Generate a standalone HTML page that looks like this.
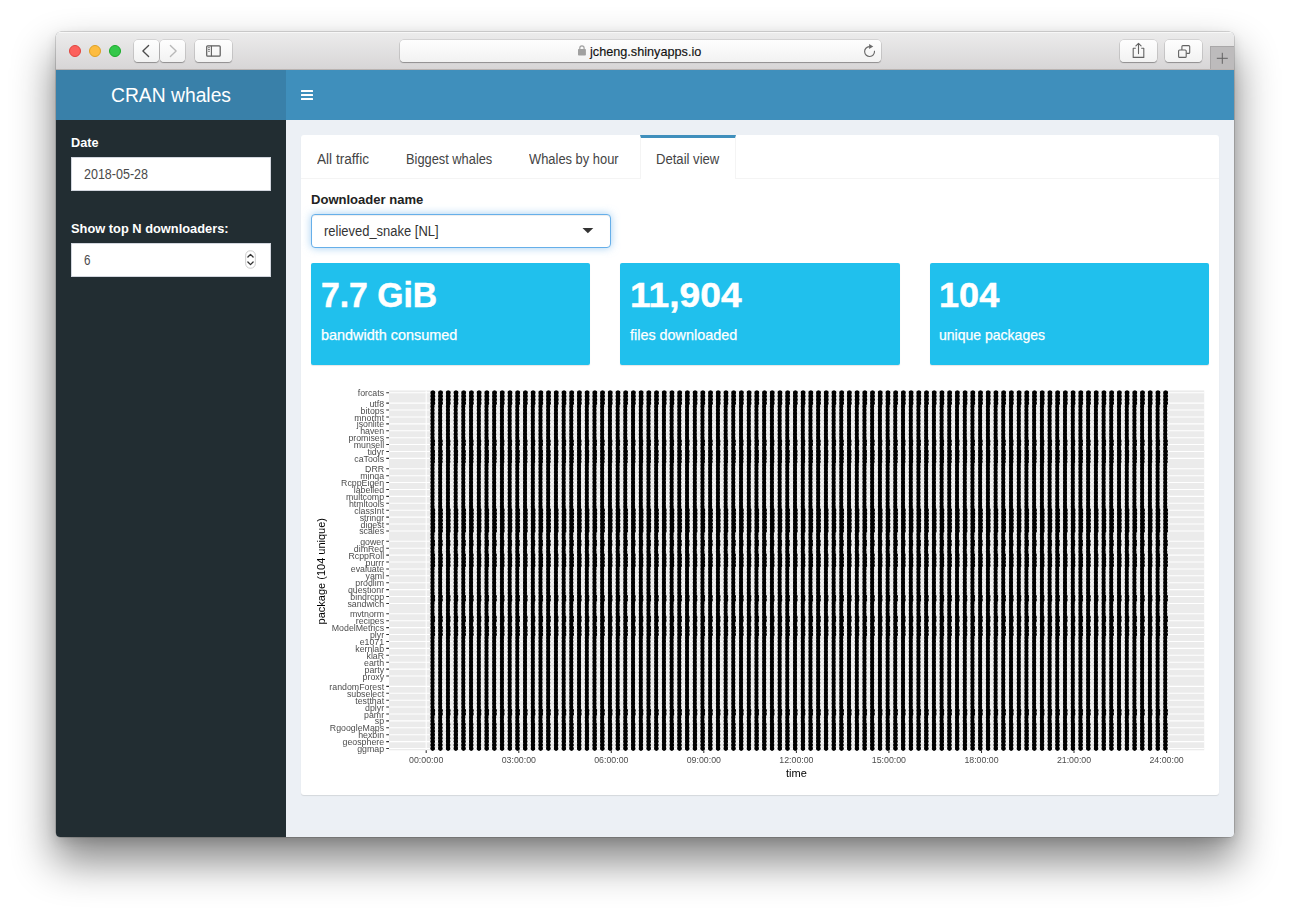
<!DOCTYPE html>
<html lang="en">
<head>
<meta charset="utf-8">
<title>CRAN whales</title>
<style>
html,body{margin:0;padding:0;}
body{width:1290px;height:917px;background:#fff;position:relative;overflow:hidden;font-family:"Liberation Sans",sans-serif;}
.abs{position:absolute;}
.t{position:absolute;white-space:nowrap;transform-origin:0 0;line-height:normal;display:inline-block;}
#shadow{position:absolute;left:56px;top:32px;width:1178px;height:805px;border-radius:5px;
  box-shadow:0 0 0 0.5px rgba(0,0,0,.28),0 23px 42px 2px rgba(0,0,0,.47),0 4px 12px rgba(0,0,0,.12);}
#win{position:absolute;left:56px;top:32px;width:1178px;height:805px;border-radius:5px 5px 4px 4px;overflow:hidden;background:#ecf0f5;}
#toolbar{position:absolute;left:0;top:0;width:1178px;height:38px;background:linear-gradient(#ececec,#d7d5d6);box-shadow:inset 0 1px 0 #f7f7f7;}
#toolbar:after{content:"";position:absolute;left:0;right:0;bottom:0;height:1px;background:#b9b3b1;}
.btn{position:absolute;top:8px;height:22px;border-radius:4px;background:linear-gradient(#fefefe,#f2f2f2);box-shadow:0 0 0 .5px rgba(0,0,0,.18),0 1px 1px -.5px rgba(0,0,0,.28);}
.dot{position:absolute;top:12.7px;width:12px;height:12px;border-radius:50%;box-sizing:border-box;}
#logo{position:absolute;left:0;top:38px;width:230px;height:50px;background:#3980a9;}
#nav{position:absolute;left:230px;top:38px;width:948px;height:50px;background:#3f8fbc;}
#side{position:absolute;left:0;top:88px;width:230px;height:717px;background:#222d32;}
.inp{position:absolute;left:15px;width:200px;height:34px;background:#fff;border:1px solid #d2d6de;box-sizing:border-box;}
#box{position:absolute;left:245px;top:103px;width:918px;height:660px;background:#fff;border-radius:3px;box-shadow:0 1px 1px rgba(0,0,0,.1);}
#tabline{position:absolute;left:0;top:43px;width:918px;height:1px;background:#f4f4f4;}
#acttab{position:absolute;left:339px;top:0;width:96px;height:44px;background:#fff;border-top:3px solid #3f8fbc;border-left:1px solid #f4f4f4;border-right:1px solid #f4f4f4;box-sizing:border-box;}
.vb{position:absolute;top:128px;height:102px;background:#20c0ed;border-radius:2px;box-shadow:0 1px 1px rgba(0,0,0,.1);}
#selbox{position:absolute;left:10px;top:79px;width:300px;height:34px;box-sizing:border-box;border:1px solid #66afe9;border-radius:4px;background:#fff;box-shadow:inset 0 1px 1px rgba(0,0,0,.075),0 0 8px rgba(102,175,233,.6);}
</style>
</head>
<body>
<div id="shadow"></div>
<div id="win">
  <div id="toolbar">
    <div class="dot" style="left:13px;background:#fc615d;border:.5px solid #e0443e;"></div>
    <div class="dot" style="left:33px;background:#fdbc40;border:.5px solid #dea123;"></div>
    <div class="dot" style="left:53px;background:#34c84a;border:.5px solid #1aab29;"></div>
    <div class="btn" style="left:78px;width:25px;"></div>
    <div class="btn" style="left:104px;width:25px;"></div>
    <div class="btn" style="left:139px;width:37px;"></div>
    <div class="btn" style="left:343.5px;width:481.2px;"></div>
    <div class="btn" style="left:1064px;width:36.8px;"></div>
    <div class="btn" style="left:1108.7px;width:37.4px;"></div>
    <div class="abs" style="left:1153.8px;top:13.6px;width:25px;height:24px;background:#bdbbbc;box-shadow:inset 1px 1px 0 #a9a7a8;"></div>
    <svg class="abs" style="left:0;top:0" width="1178" height="38" viewBox="0 0 1178 38" fill="none">
      <!-- back / forward -->
      <path d="M92.6 13.5 L86.9 19 L92.6 24.5" stroke="#4d4d4d" stroke-width="1.35" stroke-linecap="round" stroke-linejoin="round"/>
      <path d="M114.4 13.5 L120.1 19 L114.4 24.5" stroke="#b8b8b8" stroke-width="1.35" stroke-linecap="round" stroke-linejoin="round"/>
      <!-- sidebar icon -->
      <rect x="150.7" y="13.8" width="13.5" height="10.4" rx="1" stroke="#5e5e5e" stroke-width="1.25"/>
      <path d="M155.4 13.8V24.2" stroke="#5e5e5e" stroke-width="1.1"/>
      <path d="M152 15.7h1.9M152 17.5h1.9M152 19.3h1.9" stroke="#5e5e5e" stroke-width=".8"/>
      <!-- lock -->
      <rect x="522" y="16.9" width="7.9" height="6.6" rx=".8" fill="#a0a0a0"/>
      <path d="M523.8 17.5v-1.4a2.15 2.15 0 0 1 4.3 0V17.5" stroke="#a0a0a0" stroke-width="1.2"/>
      <!-- reload -->
      <path d="M813.3 14.6A4.95 4.95 0 1 0 818.5 19.2" stroke="#6a6a6a" stroke-width="1.15" stroke-linecap="round"/>
      <path d="M813.1 12.1l4.2 2.3-4.2 2.6z" fill="#6a6a6a"/>
      <!-- share -->
      <path d="M1079.8 16.2h-2.6v9.2h10.6v-9.2h-2.6" stroke="#626262" stroke-width="1.1" stroke-linejoin="round"/>
      <path d="M1082.5 21.6v-10M1079.9 13.9l2.6-2.6 2.6 2.6" stroke="#626262" stroke-width="1.1" stroke-linecap="round" stroke-linejoin="round"/>
      <!-- tabs -->
      <rect x="1122.6" y="18" width="7.6" height="7.4" rx="1" stroke="#626262" stroke-width="1.1"/>
      <path d="M1125.9 18v-3.4a1 1 0 0 1 1-1h5.8a1 1 0 0 1 1 1v5.8a1 1 0 0 1-1 1h-2.4" stroke="#626262" stroke-width="1.1"/>
      <!-- plus -->
      <path d="M1166.3 20.8v11M1160.8 26.3h11" stroke="#626262" stroke-width="1"/>
    </svg>
  </div>
  <div id="logo"></div>
  <div id="nav">
    <div class="abs" style="left:14.9px;top:19.8px;width:12.6px;height:2.1px;background:#fff;border-radius:.5px;"></div>
    <div class="abs" style="left:14.9px;top:23.85px;width:12.6px;height:2.1px;background:#fff;border-radius:.5px;"></div>
    <div class="abs" style="left:14.9px;top:27.9px;width:12.6px;height:2.1px;background:#fff;border-radius:.5px;"></div>
  </div>
  <div id="side">
    <div class="inp" style="top:37px;"></div>
    <div class="inp" style="top:123px;"></div>
    <svg class="abs" style="left:188px;top:130px" width="14" height="20" viewBox="0 0 14 20" fill="none">
      <rect x="1.7" y="0.8" width="9.6" height="17.4" rx="4.4" fill="#fff" stroke="#c6c6c6" stroke-width=".9"/>
      <path d="M3.9 7l2.6-2.6 2.6 2.6M3.9 12l2.6 2.6 2.6-2.6" stroke="#333" stroke-width="1.3" stroke-linecap="round" stroke-linejoin="round"/>
    </svg>
  </div>
  <div id="box">
    <div id="tabline"></div>
    <div id="acttab"></div>
    <div id="selbox"></div>
    <svg class="abs" style="left:279.7px;top:91.8px" width="14" height="8" viewBox="0 0 14 8"><path d="M1.5 0.9h10.8L6.9 6.2z" fill="#333"/></svg>
    <div class="vb" style="left:10px;width:279px;"></div>
    <div class="vb" style="left:319px;width:280px;"></div>
    <div class="vb" style="left:629px;width:279px;"></div>
  </div>
</div>
<svg id="chart" width="898" height="400" viewBox="311 380 898 400" style="position:absolute;left:311px;top:380px;will-change:transform" font-family='"Liberation Sans", sans-serif'>
<rect x="311" y="380" width="898" height="400" fill="#fff"/>
<rect x="389.0" y="390.4" width="815.2" height="359.9" fill="#ebebeb"/>
<path d="M472.5 390.4V750.3M565.0 390.4V750.3M657.6 390.4V750.3M750.1 390.4V750.3M842.7 390.4V750.3M935.2 390.4V750.3M1027.8 390.4V750.3M1120.3 390.4V750.3" stroke="#f4f4f4" stroke-width="0.6" fill="none"/>
<path d="M389.0 392.77H1204.2M389.0 403.13H1204.2M389.0 410.04H1204.2M389.0 416.95H1204.2M389.0 423.86H1204.2M389.0 430.77H1204.2M389.0 437.67H1204.2M389.0 444.58H1204.2M389.0 451.49H1204.2M389.0 458.40H1204.2M389.0 468.76H1204.2M389.0 475.67H1204.2M389.0 482.57H1204.2M389.0 489.48H1204.2M389.0 496.39H1204.2M389.0 503.30H1204.2M389.0 510.21H1204.2M389.0 517.11H1204.2M389.0 524.02H1204.2M389.0 530.93H1204.2M389.0 541.29H1204.2M389.0 548.20H1204.2M389.0 555.11H1204.2M389.0 562.02H1204.2M389.0 568.92H1204.2M389.0 575.83H1204.2M389.0 582.74H1204.2M389.0 589.65H1204.2M389.0 596.55H1204.2M389.0 603.46H1204.2M389.0 613.82H1204.2M389.0 620.73H1204.2M389.0 627.64H1204.2M389.0 634.55H1204.2M389.0 641.46H1204.2M389.0 648.36H1204.2M389.0 655.27H1204.2M389.0 662.18H1204.2M389.0 669.09H1204.2M389.0 676.00H1204.2M389.0 686.36H1204.2M389.0 693.26H1204.2M389.0 700.17H1204.2M389.0 707.08H1204.2M389.0 713.99H1204.2M389.0 720.90H1204.2M389.0 727.80H1204.2M389.0 734.71H1204.2M389.0 741.62H1204.2M389.0 748.53H1204.2M426.2 390.4V750.3M518.8 390.4V750.3M611.3 390.4V750.3M703.8 390.4V750.3M796.4 390.4V750.3M888.9 390.4V750.3M981.5 390.4V750.3M1074.0 390.4V750.3M1166.6 390.4V750.3" stroke="#fff" stroke-width="1.07" fill="none"/>
<path d="M432.50 392.77V748.54M440.21 392.77V748.54M447.93 392.77V748.54M455.64 392.77V748.54M463.35 392.77V748.54M471.07 392.77V748.54M478.78 392.77V748.54M486.50 392.77V748.54M494.21 392.77V748.54M501.92 392.77V748.54M509.64 392.77V748.54M517.35 392.77V748.54M525.06 392.77V748.54M532.78 392.77V748.54M540.49 392.77V748.54M548.21 392.77V748.54M555.92 392.77V748.54M563.63 392.77V748.54M571.35 392.77V748.54M579.06 392.77V748.54M586.77 392.77V748.54M594.49 392.77V748.54M602.20 392.77V748.54M609.91 392.77V748.54M617.63 392.77V748.54M625.34 392.77V748.54M633.06 392.77V748.54M640.77 392.77V748.54M648.48 392.77V748.54M656.20 392.77V748.54M663.91 392.77V748.54M671.62 392.77V748.54M679.34 392.77V748.54M687.05 392.77V748.54M694.77 392.77V748.54M702.48 392.77V748.54M710.19 392.77V748.54M717.91 392.77V748.54M725.62 392.77V748.54M733.33 392.77V748.54M741.05 392.77V748.54M748.76 392.77V748.54M756.47 392.77V748.54M764.19 392.77V748.54M771.90 392.77V748.54M779.62 392.77V748.54M787.33 392.77V748.54M795.04 392.77V748.54M802.76 392.77V748.54M810.47 392.77V748.54M818.18 392.77V748.54M825.90 392.77V748.54M833.61 392.77V748.54M841.33 392.77V748.54M849.04 392.77V748.54M856.75 392.77V748.54M864.47 392.77V748.54M872.18 392.77V748.54M879.89 392.77V748.54M887.61 392.77V748.54M895.32 392.77V748.54M903.03 392.77V748.54M910.75 392.77V748.54M918.46 392.77V748.54M926.18 392.77V748.54M933.89 392.77V748.54M941.60 392.77V748.54M949.32 392.77V748.54M957.03 392.77V748.54M964.74 392.77V748.54M972.46 392.77V748.54M980.17 392.77V748.54M987.89 392.77V748.54M995.60 392.77V748.54M1003.31 392.77V748.54M1011.03 392.77V748.54M1018.74 392.77V748.54M1026.45 392.77V748.54M1034.17 392.77V748.54M1041.88 392.77V748.54M1049.59 392.77V748.54M1057.31 392.77V748.54M1065.02 392.77V748.54M1072.74 392.77V748.54M1080.45 392.77V748.54M1088.16 392.77V748.54M1095.88 392.77V748.54M1103.59 392.77V748.54M1111.30 392.77V748.54M1119.02 392.77V748.54M1126.73 392.77V748.54M1134.45 392.77V748.54M1142.16 392.77V748.54M1149.87 392.77V748.54M1157.59 392.77V748.54M1165.30 392.77V748.54" stroke="#000" stroke-width="3.3" fill="none"/>
<path d="M432.50 392.77V748.54M440.21 392.77V748.54M447.93 392.77V748.54M455.64 392.77V748.54M463.35 392.77V748.54M471.07 392.77V748.54M478.78 392.77V748.54M486.50 392.77V748.54M494.21 392.77V748.54M501.92 392.77V748.54M509.64 392.77V748.54M517.35 392.77V748.54M525.06 392.77V748.54M532.78 392.77V748.54M540.49 392.77V748.54M548.21 392.77V748.54M555.92 392.77V748.54M563.63 392.77V748.54M571.35 392.77V748.54M579.06 392.77V748.54M586.77 392.77V748.54M594.49 392.77V748.54M602.20 392.77V748.54M609.91 392.77V748.54M617.63 392.77V748.54M625.34 392.77V748.54M633.06 392.77V748.54M640.77 392.77V748.54M648.48 392.77V748.54M656.20 392.77V748.54M663.91 392.77V748.54M671.62 392.77V748.54M679.34 392.77V748.54M687.05 392.77V748.54M694.77 392.77V748.54M702.48 392.77V748.54M710.19 392.77V748.54M717.91 392.77V748.54M725.62 392.77V748.54M733.33 392.77V748.54M741.05 392.77V748.54M748.76 392.77V748.54M756.47 392.77V748.54M764.19 392.77V748.54M771.90 392.77V748.54M779.62 392.77V748.54M787.33 392.77V748.54M795.04 392.77V748.54M802.76 392.77V748.54M810.47 392.77V748.54M818.18 392.77V748.54M825.90 392.77V748.54M833.61 392.77V748.54M841.33 392.77V748.54M849.04 392.77V748.54M856.75 392.77V748.54M864.47 392.77V748.54M872.18 392.77V748.54M879.89 392.77V748.54M887.61 392.77V748.54M895.32 392.77V748.54M903.03 392.77V748.54M910.75 392.77V748.54M918.46 392.77V748.54M926.18 392.77V748.54M933.89 392.77V748.54M941.60 392.77V748.54M949.32 392.77V748.54M957.03 392.77V748.54M964.74 392.77V748.54M972.46 392.77V748.54M980.17 392.77V748.54M987.89 392.77V748.54M995.60 392.77V748.54M1003.31 392.77V748.54M1011.03 392.77V748.54M1018.74 392.77V748.54M1026.45 392.77V748.54M1034.17 392.77V748.54M1041.88 392.77V748.54M1049.59 392.77V748.54M1057.31 392.77V748.54M1065.02 392.77V748.54M1072.74 392.77V748.54M1080.45 392.77V748.54M1088.16 392.77V748.54M1095.88 392.77V748.54M1103.59 392.77V748.54M1111.30 392.77V748.54M1119.02 392.77V748.54M1126.73 392.77V748.54M1134.45 392.77V748.54M1142.16 392.77V748.54M1149.87 392.77V748.54M1157.59 392.77V748.54M1165.30 392.77V748.54" stroke="#000" stroke-width="4.3" stroke-linecap="round" stroke-dasharray="0 3.4539" fill="none"/>
<path d="M433.20 392.77V403.14M433.00 441.13V444.59M433.00 451.49V454.95M432.90 458.40V461.86M433.20 510.21V530.94M433.00 541.29V544.76M433.10 555.11V565.48M433.10 596.55V600.02M433.10 617.28V620.74M433.10 627.64V634.56M433.10 710.53V714.00M432.85 724.35V748.54M440.91 392.77V403.14M440.71 441.13V444.59M440.71 451.49V454.95M440.61 458.40V461.86M440.91 510.21V530.94M440.71 541.29V544.76M440.81 555.11V565.48M440.81 596.55V600.02M440.81 617.28V620.74M440.81 627.64V634.56M440.81 710.53V714.00M440.56 724.35V748.54M448.63 392.77V403.14M448.43 441.13V444.59M448.43 451.49V454.95M448.33 458.40V461.86M448.63 510.21V530.94M448.43 541.29V544.76M448.53 555.11V565.48M448.53 596.55V600.02M448.53 617.28V620.74M448.53 627.64V634.56M448.53 710.53V714.00M448.28 724.35V748.54M456.34 392.77V403.14M456.14 441.13V444.59M456.14 451.49V454.95M456.04 458.40V461.86M456.34 510.21V530.94M456.14 541.29V544.76M456.24 555.11V565.48M456.24 596.55V600.02M456.24 617.28V620.74M456.24 627.64V634.56M456.24 710.53V714.00M455.99 724.35V748.54M464.05 392.77V403.14M463.85 441.13V444.59M463.85 451.49V454.95M463.75 458.40V461.86M464.05 510.21V530.94M463.85 541.29V544.76M463.95 555.11V565.48M463.95 596.55V600.02M463.95 617.28V620.74M463.95 627.64V634.56M463.95 710.53V714.00M463.70 724.35V748.54M471.77 392.77V403.14M471.57 441.13V444.59M471.57 451.49V454.95M471.47 458.40V461.86M471.77 510.21V530.94M471.57 541.29V544.76M471.67 555.11V565.48M471.67 596.55V600.02M471.67 617.28V620.74M471.67 627.64V634.56M471.67 710.53V714.00M471.42 724.35V748.54M479.48 392.77V403.14M479.28 441.13V444.59M479.28 451.49V454.95M479.18 458.40V461.86M479.48 510.21V530.94M479.28 541.29V544.76M479.38 555.11V565.48M479.38 596.55V600.02M479.38 617.28V620.74M479.38 627.64V634.56M479.38 710.53V714.00M479.13 724.35V748.54M487.20 392.77V403.14M487.00 441.13V444.59M487.00 451.49V454.95M486.90 458.40V461.86M487.20 510.21V530.94M487.00 541.29V544.76M487.10 555.11V565.48M487.10 596.55V600.02M487.10 617.28V620.74M487.10 627.64V634.56M487.10 710.53V714.00M486.85 724.35V748.54M494.91 392.77V403.14M494.71 441.13V444.59M494.71 451.49V454.95M494.61 458.40V461.86M494.91 510.21V530.94M494.71 541.29V544.76M494.81 555.11V565.48M494.81 596.55V600.02M494.81 617.28V620.74M494.81 627.64V634.56M494.81 710.53V714.00M494.56 724.35V748.54M502.62 392.77V403.14M502.42 441.13V444.59M502.42 451.49V454.95M502.32 458.40V461.86M502.62 510.21V530.94M502.42 541.29V544.76M502.52 555.11V565.48M502.52 596.55V600.02M502.52 617.28V620.74M502.52 627.64V634.56M502.52 710.53V714.00M502.27 724.35V748.54M510.34 392.77V403.14M510.14 441.13V444.59M510.14 451.49V454.95M510.04 458.40V461.86M510.34 510.21V530.94M510.14 541.29V544.76M510.24 555.11V565.48M510.24 596.55V600.02M510.24 617.28V620.74M510.24 627.64V634.56M510.24 710.53V714.00M509.99 724.35V748.54M518.05 392.77V403.14M517.85 441.13V444.59M517.85 451.49V454.95M517.75 458.40V461.86M518.05 510.21V530.94M517.85 541.29V544.76M517.95 555.11V565.48M517.95 596.55V600.02M517.95 617.28V620.74M517.95 627.64V634.56M517.95 710.53V714.00M517.70 724.35V748.54M525.76 392.77V403.14M525.56 441.13V444.59M525.56 451.49V454.95M525.46 458.40V461.86M525.76 510.21V530.94M525.56 541.29V544.76M525.66 555.11V565.48M525.66 596.55V600.02M525.66 617.28V620.74M525.66 627.64V634.56M525.66 710.53V714.00M525.41 724.35V748.54M533.48 392.77V403.14M533.28 441.13V444.59M533.28 451.49V454.95M533.18 458.40V461.86M533.48 510.21V530.94M533.28 541.29V544.76M533.38 555.11V565.48M533.38 596.55V600.02M533.38 617.28V620.74M533.38 627.64V634.56M533.38 710.53V714.00M533.13 724.35V748.54M541.19 392.77V403.14M540.99 441.13V444.59M540.99 451.49V454.95M540.89 458.40V461.86M541.19 510.21V530.94M540.99 541.29V544.76M541.09 555.11V565.48M541.09 596.55V600.02M541.09 617.28V620.74M541.09 627.64V634.56M541.09 710.53V714.00M540.84 724.35V748.54M548.91 392.77V403.14M548.71 441.13V444.59M548.71 451.49V454.95M548.61 458.40V461.86M548.91 510.21V530.94M548.71 541.29V544.76M548.81 555.11V565.48M548.81 596.55V600.02M548.81 617.28V620.74M548.81 627.64V634.56M548.81 710.53V714.00M548.56 724.35V748.54M556.62 392.77V403.14M556.42 441.13V444.59M556.42 451.49V454.95M556.32 458.40V461.86M556.62 510.21V530.94M556.42 541.29V544.76M556.52 555.11V565.48M556.52 596.55V600.02M556.52 617.28V620.74M556.52 627.64V634.56M556.52 710.53V714.00M556.27 724.35V748.54M564.33 392.77V403.14M564.13 441.13V444.59M564.13 451.49V454.95M564.03 458.40V461.86M564.33 510.21V530.94M564.13 541.29V544.76M564.23 555.11V565.48M564.23 596.55V600.02M564.23 617.28V620.74M564.23 627.64V634.56M564.23 710.53V714.00M563.98 724.35V748.54M572.05 392.77V403.14M571.85 441.13V444.59M571.85 451.49V454.95M571.75 458.40V461.86M572.05 510.21V530.94M571.85 541.29V544.76M571.95 555.11V565.48M571.95 596.55V600.02M571.95 617.28V620.74M571.95 627.64V634.56M571.95 710.53V714.00M571.70 724.35V748.54M579.76 392.77V403.14M579.56 441.13V444.59M579.56 451.49V454.95M579.46 458.40V461.86M579.76 510.21V530.94M579.56 541.29V544.76M579.66 555.11V565.48M579.66 596.55V600.02M579.66 617.28V620.74M579.66 627.64V634.56M579.66 710.53V714.00M579.41 724.35V748.54M587.47 392.77V403.14M587.27 441.13V444.59M587.27 451.49V454.95M587.17 458.40V461.86M587.47 510.21V530.94M587.27 541.29V544.76M587.37 555.11V565.48M587.37 596.55V600.02M587.37 617.28V620.74M587.37 627.64V634.56M587.37 710.53V714.00M587.12 724.35V748.54M595.19 392.77V403.14M594.99 441.13V444.59M594.99 451.49V454.95M594.89 458.40V461.86M595.19 510.21V530.94M594.99 541.29V544.76M595.09 555.11V565.48M595.09 596.55V600.02M595.09 617.28V620.74M595.09 627.64V634.56M595.09 710.53V714.00M594.84 724.35V748.54M602.90 392.77V403.14M602.70 441.13V444.59M602.70 451.49V454.95M602.60 458.40V461.86M602.90 510.21V530.94M602.70 541.29V544.76M602.80 555.11V565.48M602.80 596.55V600.02M602.80 617.28V620.74M602.80 627.64V634.56M602.80 710.53V714.00M602.55 724.35V748.54M610.61 392.77V403.14M610.41 441.13V444.59M610.41 451.49V454.95M610.31 458.40V461.86M610.61 510.21V530.94M610.41 541.29V544.76M610.51 555.11V565.48M610.51 596.55V600.02M610.51 617.28V620.74M610.51 627.64V634.56M610.51 710.53V714.00M610.26 724.35V748.54M618.33 392.77V403.14M618.13 441.13V444.59M618.13 451.49V454.95M618.03 458.40V461.86M618.33 510.21V530.94M618.13 541.29V544.76M618.23 555.11V565.48M618.23 596.55V600.02M618.23 617.28V620.74M618.23 627.64V634.56M618.23 710.53V714.00M617.98 724.35V748.54M626.04 392.77V403.14M625.84 441.13V444.59M625.84 451.49V454.95M625.74 458.40V461.86M626.04 510.21V530.94M625.84 541.29V544.76M625.94 555.11V565.48M625.94 596.55V600.02M625.94 617.28V620.74M625.94 627.64V634.56M625.94 710.53V714.00M625.69 724.35V748.54M633.76 392.77V403.14M633.56 441.13V444.59M633.56 451.49V454.95M633.46 458.40V461.86M633.76 510.21V530.94M633.56 541.29V544.76M633.66 555.11V565.48M633.66 596.55V600.02M633.66 617.28V620.74M633.66 627.64V634.56M633.66 710.53V714.00M633.41 724.35V748.54M641.47 392.77V403.14M641.27 441.13V444.59M641.27 451.49V454.95M641.17 458.40V461.86M641.47 510.21V530.94M641.27 541.29V544.76M641.37 555.11V565.48M641.37 596.55V600.02M641.37 617.28V620.74M641.37 627.64V634.56M641.37 710.53V714.00M641.12 724.35V748.54M649.18 392.77V403.14M648.98 441.13V444.59M648.98 451.49V454.95M648.88 458.40V461.86M649.18 510.21V530.94M648.98 541.29V544.76M649.08 555.11V565.48M649.08 596.55V600.02M649.08 617.28V620.74M649.08 627.64V634.56M649.08 710.53V714.00M648.83 724.35V748.54M656.90 392.77V403.14M656.70 441.13V444.59M656.70 451.49V454.95M656.60 458.40V461.86M656.90 510.21V530.94M656.70 541.29V544.76M656.80 555.11V565.48M656.80 596.55V600.02M656.80 617.28V620.74M656.80 627.64V634.56M656.80 710.53V714.00M656.55 724.35V748.54M664.61 392.77V403.14M664.41 441.13V444.59M664.41 451.49V454.95M664.31 458.40V461.86M664.61 510.21V530.94M664.41 541.29V544.76M664.51 555.11V565.48M664.51 596.55V600.02M664.51 617.28V620.74M664.51 627.64V634.56M664.51 710.53V714.00M664.26 724.35V748.54M672.32 392.77V403.14M672.12 441.13V444.59M672.12 451.49V454.95M672.02 458.40V461.86M672.32 510.21V530.94M672.12 541.29V544.76M672.22 555.11V565.48M672.22 596.55V600.02M672.22 617.28V620.74M672.22 627.64V634.56M672.22 710.53V714.00M671.97 724.35V748.54M680.04 392.77V403.14M679.84 441.13V444.59M679.84 451.49V454.95M679.74 458.40V461.86M680.04 510.21V530.94M679.84 541.29V544.76M679.94 555.11V565.48M679.94 596.55V600.02M679.94 617.28V620.74M679.94 627.64V634.56M679.94 710.53V714.00M679.69 724.35V748.54M687.75 392.77V403.14M687.55 441.13V444.59M687.55 451.49V454.95M687.45 458.40V461.86M687.75 510.21V530.94M687.55 541.29V544.76M687.65 555.11V565.48M687.65 596.55V600.02M687.65 617.28V620.74M687.65 627.64V634.56M687.65 710.53V714.00M687.40 724.35V748.54M695.47 392.77V403.14M695.27 441.13V444.59M695.27 451.49V454.95M695.17 458.40V461.86M695.47 510.21V530.94M695.27 541.29V544.76M695.37 555.11V565.48M695.37 596.55V600.02M695.37 617.28V620.74M695.37 627.64V634.56M695.37 710.53V714.00M695.12 724.35V748.54M703.18 392.77V403.14M702.98 441.13V444.59M702.98 451.49V454.95M702.88 458.40V461.86M703.18 510.21V530.94M702.98 541.29V544.76M703.08 555.11V565.48M703.08 596.55V600.02M703.08 617.28V620.74M703.08 627.64V634.56M703.08 710.53V714.00M702.83 724.35V748.54M710.89 392.77V403.14M710.69 441.13V444.59M710.69 451.49V454.95M710.59 458.40V461.86M710.89 510.21V530.94M710.69 541.29V544.76M710.79 555.11V565.48M710.79 596.55V600.02M710.79 617.28V620.74M710.79 627.64V634.56M710.79 710.53V714.00M710.54 724.35V748.54M718.61 392.77V403.14M718.41 441.13V444.59M718.41 451.49V454.95M718.31 458.40V461.86M718.61 510.21V530.94M718.41 541.29V544.76M718.51 555.11V565.48M718.51 596.55V600.02M718.51 617.28V620.74M718.51 627.64V634.56M718.51 710.53V714.00M718.26 724.35V748.54M726.32 392.77V403.14M726.12 441.13V444.59M726.12 451.49V454.95M726.02 458.40V461.86M726.32 510.21V530.94M726.12 541.29V544.76M726.22 555.11V565.48M726.22 596.55V600.02M726.22 617.28V620.74M726.22 627.64V634.56M726.22 710.53V714.00M725.97 724.35V748.54M734.03 392.77V403.14M733.83 441.13V444.59M733.83 451.49V454.95M733.73 458.40V461.86M734.03 510.21V530.94M733.83 541.29V544.76M733.93 555.11V565.48M733.93 596.55V600.02M733.93 617.28V620.74M733.93 627.64V634.56M733.93 710.53V714.00M733.68 724.35V748.54M741.75 392.77V403.14M741.55 441.13V444.59M741.55 451.49V454.95M741.45 458.40V461.86M741.75 510.21V530.94M741.55 541.29V544.76M741.65 555.11V565.48M741.65 596.55V600.02M741.65 617.28V620.74M741.65 627.64V634.56M741.65 710.53V714.00M741.40 724.35V748.54M749.46 392.77V403.14M749.26 441.13V444.59M749.26 451.49V454.95M749.16 458.40V461.86M749.46 510.21V530.94M749.26 541.29V544.76M749.36 555.11V565.48M749.36 596.55V600.02M749.36 617.28V620.74M749.36 627.64V634.56M749.36 710.53V714.00M749.11 724.35V748.54M757.17 392.77V403.14M756.97 441.13V444.59M756.97 451.49V454.95M756.87 458.40V461.86M757.17 510.21V530.94M756.97 541.29V544.76M757.07 555.11V565.48M757.07 596.55V600.02M757.07 617.28V620.74M757.07 627.64V634.56M757.07 710.53V714.00M756.82 724.35V748.54M764.89 392.77V403.14M764.69 441.13V444.59M764.69 451.49V454.95M764.59 458.40V461.86M764.89 510.21V530.94M764.69 541.29V544.76M764.79 555.11V565.48M764.79 596.55V600.02M764.79 617.28V620.74M764.79 627.64V634.56M764.79 710.53V714.00M764.54 724.35V748.54M772.60 392.77V403.14M772.40 441.13V444.59M772.40 451.49V454.95M772.30 458.40V461.86M772.60 510.21V530.94M772.40 541.29V544.76M772.50 555.11V565.48M772.50 596.55V600.02M772.50 617.28V620.74M772.50 627.64V634.56M772.50 710.53V714.00M772.25 724.35V748.54M780.32 392.77V403.14M780.12 441.13V444.59M780.12 451.49V454.95M780.02 458.40V461.86M780.32 510.21V530.94M780.12 541.29V544.76M780.22 555.11V565.48M780.22 596.55V600.02M780.22 617.28V620.74M780.22 627.64V634.56M780.22 710.53V714.00M779.97 724.35V748.54M788.03 392.77V403.14M787.83 441.13V444.59M787.83 451.49V454.95M787.73 458.40V461.86M788.03 510.21V530.94M787.83 541.29V544.76M787.93 555.11V565.48M787.93 596.55V600.02M787.93 617.28V620.74M787.93 627.64V634.56M787.93 710.53V714.00M787.68 724.35V748.54M795.74 392.77V403.14M795.54 441.13V444.59M795.54 451.49V454.95M795.44 458.40V461.86M795.74 510.21V530.94M795.54 541.29V544.76M795.64 555.11V565.48M795.64 596.55V600.02M795.64 617.28V620.74M795.64 627.64V634.56M795.64 710.53V714.00M795.39 724.35V748.54M803.46 392.77V403.14M803.26 441.13V444.59M803.26 451.49V454.95M803.16 458.40V461.86M803.46 510.21V530.94M803.26 541.29V544.76M803.36 555.11V565.48M803.36 596.55V600.02M803.36 617.28V620.74M803.36 627.64V634.56M803.36 710.53V714.00M803.11 724.35V748.54M811.17 392.77V403.14M810.97 441.13V444.59M810.97 451.49V454.95M810.87 458.40V461.86M811.17 510.21V530.94M810.97 541.29V544.76M811.07 555.11V565.48M811.07 596.55V600.02M811.07 617.28V620.74M811.07 627.64V634.56M811.07 710.53V714.00M810.82 724.35V748.54M818.88 392.77V403.14M818.68 441.13V444.59M818.68 451.49V454.95M818.58 458.40V461.86M818.88 510.21V530.94M818.68 541.29V544.76M818.78 555.11V565.48M818.78 596.55V600.02M818.78 617.28V620.74M818.78 627.64V634.56M818.78 710.53V714.00M818.53 724.35V748.54M826.60 392.77V403.14M826.40 441.13V444.59M826.40 451.49V454.95M826.30 458.40V461.86M826.60 510.21V530.94M826.40 541.29V544.76M826.50 555.11V565.48M826.50 596.55V600.02M826.50 617.28V620.74M826.50 627.64V634.56M826.50 710.53V714.00M826.25 724.35V748.54M834.31 392.77V403.14M834.11 441.13V444.59M834.11 451.49V454.95M834.01 458.40V461.86M834.31 510.21V530.94M834.11 541.29V544.76M834.21 555.11V565.48M834.21 596.55V600.02M834.21 617.28V620.74M834.21 627.64V634.56M834.21 710.53V714.00M833.96 724.35V748.54M842.03 392.77V403.14M841.83 441.13V444.59M841.83 451.49V454.95M841.73 458.40V461.86M842.03 510.21V530.94M841.83 541.29V544.76M841.93 555.11V565.48M841.93 596.55V600.02M841.93 617.28V620.74M841.93 627.64V634.56M841.93 710.53V714.00M841.68 724.35V748.54M849.74 392.77V403.14M849.54 441.13V444.59M849.54 451.49V454.95M849.44 458.40V461.86M849.74 510.21V530.94M849.54 541.29V544.76M849.64 555.11V565.48M849.64 596.55V600.02M849.64 617.28V620.74M849.64 627.64V634.56M849.64 710.53V714.00M849.39 724.35V748.54M857.45 392.77V403.14M857.25 441.13V444.59M857.25 451.49V454.95M857.15 458.40V461.86M857.45 510.21V530.94M857.25 541.29V544.76M857.35 555.11V565.48M857.35 596.55V600.02M857.35 617.28V620.74M857.35 627.64V634.56M857.35 710.53V714.00M857.10 724.35V748.54M865.17 392.77V403.14M864.97 441.13V444.59M864.97 451.49V454.95M864.87 458.40V461.86M865.17 510.21V530.94M864.97 541.29V544.76M865.07 555.11V565.48M865.07 596.55V600.02M865.07 617.28V620.74M865.07 627.64V634.56M865.07 710.53V714.00M864.82 724.35V748.54M872.88 392.77V403.14M872.68 441.13V444.59M872.68 451.49V454.95M872.58 458.40V461.86M872.88 510.21V530.94M872.68 541.29V544.76M872.78 555.11V565.48M872.78 596.55V600.02M872.78 617.28V620.74M872.78 627.64V634.56M872.78 710.53V714.00M872.53 724.35V748.54M880.59 392.77V403.14M880.39 441.13V444.59M880.39 451.49V454.95M880.29 458.40V461.86M880.59 510.21V530.94M880.39 541.29V544.76M880.49 555.11V565.48M880.49 596.55V600.02M880.49 617.28V620.74M880.49 627.64V634.56M880.49 710.53V714.00M880.24 724.35V748.54M888.31 392.77V403.14M888.11 441.13V444.59M888.11 451.49V454.95M888.01 458.40V461.86M888.31 510.21V530.94M888.11 541.29V544.76M888.21 555.11V565.48M888.21 596.55V600.02M888.21 617.28V620.74M888.21 627.64V634.56M888.21 710.53V714.00M887.96 724.35V748.54M896.02 392.77V403.14M895.82 441.13V444.59M895.82 451.49V454.95M895.72 458.40V461.86M896.02 510.21V530.94M895.82 541.29V544.76M895.92 555.11V565.48M895.92 596.55V600.02M895.92 617.28V620.74M895.92 627.64V634.56M895.92 710.53V714.00M895.67 724.35V748.54M903.73 392.77V403.14M903.53 441.13V444.59M903.53 451.49V454.95M903.43 458.40V461.86M903.73 510.21V530.94M903.53 541.29V544.76M903.63 555.11V565.48M903.63 596.55V600.02M903.63 617.28V620.74M903.63 627.64V634.56M903.63 710.53V714.00M903.38 724.35V748.54M911.45 392.77V403.14M911.25 441.13V444.59M911.25 451.49V454.95M911.15 458.40V461.86M911.45 510.21V530.94M911.25 541.29V544.76M911.35 555.11V565.48M911.35 596.55V600.02M911.35 617.28V620.74M911.35 627.64V634.56M911.35 710.53V714.00M911.10 724.35V748.54M919.16 392.77V403.14M918.96 441.13V444.59M918.96 451.49V454.95M918.86 458.40V461.86M919.16 510.21V530.94M918.96 541.29V544.76M919.06 555.11V565.48M919.06 596.55V600.02M919.06 617.28V620.74M919.06 627.64V634.56M919.06 710.53V714.00M918.81 724.35V748.54M926.88 392.77V403.14M926.68 441.13V444.59M926.68 451.49V454.95M926.58 458.40V461.86M926.88 510.21V530.94M926.68 541.29V544.76M926.78 555.11V565.48M926.78 596.55V600.02M926.78 617.28V620.74M926.78 627.64V634.56M926.78 710.53V714.00M926.53 724.35V748.54M934.59 392.77V403.14M934.39 441.13V444.59M934.39 451.49V454.95M934.29 458.40V461.86M934.59 510.21V530.94M934.39 541.29V544.76M934.49 555.11V565.48M934.49 596.55V600.02M934.49 617.28V620.74M934.49 627.64V634.56M934.49 710.53V714.00M934.24 724.35V748.54M942.30 392.77V403.14M942.10 441.13V444.59M942.10 451.49V454.95M942.00 458.40V461.86M942.30 510.21V530.94M942.10 541.29V544.76M942.20 555.11V565.48M942.20 596.55V600.02M942.20 617.28V620.74M942.20 627.64V634.56M942.20 710.53V714.00M941.95 724.35V748.54M950.02 392.77V403.14M949.82 441.13V444.59M949.82 451.49V454.95M949.72 458.40V461.86M950.02 510.21V530.94M949.82 541.29V544.76M949.92 555.11V565.48M949.92 596.55V600.02M949.92 617.28V620.74M949.92 627.64V634.56M949.92 710.53V714.00M949.67 724.35V748.54M957.73 392.77V403.14M957.53 441.13V444.59M957.53 451.49V454.95M957.43 458.40V461.86M957.73 510.21V530.94M957.53 541.29V544.76M957.63 555.11V565.48M957.63 596.55V600.02M957.63 617.28V620.74M957.63 627.64V634.56M957.63 710.53V714.00M957.38 724.35V748.54M965.44 392.77V403.14M965.24 441.13V444.59M965.24 451.49V454.95M965.14 458.40V461.86M965.44 510.21V530.94M965.24 541.29V544.76M965.34 555.11V565.48M965.34 596.55V600.02M965.34 617.28V620.74M965.34 627.64V634.56M965.34 710.53V714.00M965.09 724.35V748.54M973.16 392.77V403.14M972.96 441.13V444.59M972.96 451.49V454.95M972.86 458.40V461.86M973.16 510.21V530.94M972.96 541.29V544.76M973.06 555.11V565.48M973.06 596.55V600.02M973.06 617.28V620.74M973.06 627.64V634.56M973.06 710.53V714.00M972.81 724.35V748.54M980.87 392.77V403.14M980.67 441.13V444.59M980.67 451.49V454.95M980.57 458.40V461.86M980.87 510.21V530.94M980.67 541.29V544.76M980.77 555.11V565.48M980.77 596.55V600.02M980.77 617.28V620.74M980.77 627.64V634.56M980.77 710.53V714.00M980.52 724.35V748.54M988.59 392.77V403.14M988.39 441.13V444.59M988.39 451.49V454.95M988.29 458.40V461.86M988.59 510.21V530.94M988.39 541.29V544.76M988.49 555.11V565.48M988.49 596.55V600.02M988.49 617.28V620.74M988.49 627.64V634.56M988.49 710.53V714.00M988.24 724.35V748.54M996.30 392.77V403.14M996.10 441.13V444.59M996.10 451.49V454.95M996.00 458.40V461.86M996.30 510.21V530.94M996.10 541.29V544.76M996.20 555.11V565.48M996.20 596.55V600.02M996.20 617.28V620.74M996.20 627.64V634.56M996.20 710.53V714.00M995.95 724.35V748.54M1004.01 392.77V403.14M1003.81 441.13V444.59M1003.81 451.49V454.95M1003.71 458.40V461.86M1004.01 510.21V530.94M1003.81 541.29V544.76M1003.91 555.11V565.48M1003.91 596.55V600.02M1003.91 617.28V620.74M1003.91 627.64V634.56M1003.91 710.53V714.00M1003.66 724.35V748.54M1011.73 392.77V403.14M1011.53 441.13V444.59M1011.53 451.49V454.95M1011.43 458.40V461.86M1011.73 510.21V530.94M1011.53 541.29V544.76M1011.63 555.11V565.48M1011.63 596.55V600.02M1011.63 617.28V620.74M1011.63 627.64V634.56M1011.63 710.53V714.00M1011.38 724.35V748.54M1019.44 392.77V403.14M1019.24 441.13V444.59M1019.24 451.49V454.95M1019.14 458.40V461.86M1019.44 510.21V530.94M1019.24 541.29V544.76M1019.34 555.11V565.48M1019.34 596.55V600.02M1019.34 617.28V620.74M1019.34 627.64V634.56M1019.34 710.53V714.00M1019.09 724.35V748.54M1027.15 392.77V403.14M1026.95 441.13V444.59M1026.95 451.49V454.95M1026.85 458.40V461.86M1027.15 510.21V530.94M1026.95 541.29V544.76M1027.05 555.11V565.48M1027.05 596.55V600.02M1027.05 617.28V620.74M1027.05 627.64V634.56M1027.05 710.53V714.00M1026.80 724.35V748.54M1034.87 392.77V403.14M1034.67 441.13V444.59M1034.67 451.49V454.95M1034.57 458.40V461.86M1034.87 510.21V530.94M1034.67 541.29V544.76M1034.77 555.11V565.48M1034.77 596.55V600.02M1034.77 617.28V620.74M1034.77 627.64V634.56M1034.77 710.53V714.00M1034.52 724.35V748.54M1042.58 392.77V403.14M1042.38 441.13V444.59M1042.38 451.49V454.95M1042.28 458.40V461.86M1042.58 510.21V530.94M1042.38 541.29V544.76M1042.48 555.11V565.48M1042.48 596.55V600.02M1042.48 617.28V620.74M1042.48 627.64V634.56M1042.48 710.53V714.00M1042.23 724.35V748.54M1050.29 392.77V403.14M1050.09 441.13V444.59M1050.09 451.49V454.95M1049.99 458.40V461.86M1050.29 510.21V530.94M1050.09 541.29V544.76M1050.19 555.11V565.48M1050.19 596.55V600.02M1050.19 617.28V620.74M1050.19 627.64V634.56M1050.19 710.53V714.00M1049.94 724.35V748.54M1058.01 392.77V403.14M1057.81 441.13V444.59M1057.81 451.49V454.95M1057.71 458.40V461.86M1058.01 510.21V530.94M1057.81 541.29V544.76M1057.91 555.11V565.48M1057.91 596.55V600.02M1057.91 617.28V620.74M1057.91 627.64V634.56M1057.91 710.53V714.00M1057.66 724.35V748.54M1065.72 392.77V403.14M1065.52 441.13V444.59M1065.52 451.49V454.95M1065.42 458.40V461.86M1065.72 510.21V530.94M1065.52 541.29V544.76M1065.62 555.11V565.48M1065.62 596.55V600.02M1065.62 617.28V620.74M1065.62 627.64V634.56M1065.62 710.53V714.00M1065.37 724.35V748.54M1073.44 392.77V403.14M1073.24 441.13V444.59M1073.24 451.49V454.95M1073.14 458.40V461.86M1073.44 510.21V530.94M1073.24 541.29V544.76M1073.34 555.11V565.48M1073.34 596.55V600.02M1073.34 617.28V620.74M1073.34 627.64V634.56M1073.34 710.53V714.00M1073.09 724.35V748.54M1081.15 392.77V403.14M1080.95 441.13V444.59M1080.95 451.49V454.95M1080.85 458.40V461.86M1081.15 510.21V530.94M1080.95 541.29V544.76M1081.05 555.11V565.48M1081.05 596.55V600.02M1081.05 617.28V620.74M1081.05 627.64V634.56M1081.05 710.53V714.00M1080.80 724.35V748.54M1088.86 392.77V403.14M1088.66 441.13V444.59M1088.66 451.49V454.95M1088.56 458.40V461.86M1088.86 510.21V530.94M1088.66 541.29V544.76M1088.76 555.11V565.48M1088.76 596.55V600.02M1088.76 617.28V620.74M1088.76 627.64V634.56M1088.76 710.53V714.00M1088.51 724.35V748.54M1096.58 392.77V403.14M1096.38 441.13V444.59M1096.38 451.49V454.95M1096.28 458.40V461.86M1096.58 510.21V530.94M1096.38 541.29V544.76M1096.48 555.11V565.48M1096.48 596.55V600.02M1096.48 617.28V620.74M1096.48 627.64V634.56M1096.48 710.53V714.00M1096.23 724.35V748.54M1104.29 392.77V403.14M1104.09 441.13V444.59M1104.09 451.49V454.95M1103.99 458.40V461.86M1104.29 510.21V530.94M1104.09 541.29V544.76M1104.19 555.11V565.48M1104.19 596.55V600.02M1104.19 617.28V620.74M1104.19 627.64V634.56M1104.19 710.53V714.00M1103.94 724.35V748.54M1112.00 392.77V403.14M1111.80 441.13V444.59M1111.80 451.49V454.95M1111.70 458.40V461.86M1112.00 510.21V530.94M1111.80 541.29V544.76M1111.90 555.11V565.48M1111.90 596.55V600.02M1111.90 617.28V620.74M1111.90 627.64V634.56M1111.90 710.53V714.00M1111.65 724.35V748.54M1119.72 392.77V403.14M1119.52 441.13V444.59M1119.52 451.49V454.95M1119.42 458.40V461.86M1119.72 510.21V530.94M1119.52 541.29V544.76M1119.62 555.11V565.48M1119.62 596.55V600.02M1119.62 617.28V620.74M1119.62 627.64V634.56M1119.62 710.53V714.00M1119.37 724.35V748.54M1127.43 392.77V403.14M1127.23 441.13V444.59M1127.23 451.49V454.95M1127.13 458.40V461.86M1127.43 510.21V530.94M1127.23 541.29V544.76M1127.33 555.11V565.48M1127.33 596.55V600.02M1127.33 617.28V620.74M1127.33 627.64V634.56M1127.33 710.53V714.00M1127.08 724.35V748.54M1135.15 392.77V403.14M1134.95 441.13V444.59M1134.95 451.49V454.95M1134.85 458.40V461.86M1135.15 510.21V530.94M1134.95 541.29V544.76M1135.05 555.11V565.48M1135.05 596.55V600.02M1135.05 617.28V620.74M1135.05 627.64V634.56M1135.05 710.53V714.00M1134.80 724.35V748.54M1142.86 392.77V403.14M1142.66 441.13V444.59M1142.66 451.49V454.95M1142.56 458.40V461.86M1142.86 510.21V530.94M1142.66 541.29V544.76M1142.76 555.11V565.48M1142.76 596.55V600.02M1142.76 617.28V620.74M1142.76 627.64V634.56M1142.76 710.53V714.00M1142.51 724.35V748.54M1150.57 392.77V403.14M1150.37 441.13V444.59M1150.37 451.49V454.95M1150.27 458.40V461.86M1150.57 510.21V530.94M1150.37 541.29V544.76M1150.47 555.11V565.48M1150.47 596.55V600.02M1150.47 617.28V620.74M1150.47 627.64V634.56M1150.47 710.53V714.00M1150.22 724.35V748.54M1158.29 392.77V403.14M1158.09 441.13V444.59M1158.09 451.49V454.95M1157.99 458.40V461.86M1158.29 510.21V530.94M1158.09 541.29V544.76M1158.19 555.11V565.48M1158.19 596.55V600.02M1158.19 617.28V620.74M1158.19 627.64V634.56M1158.19 710.53V714.00M1157.94 724.35V748.54M1166.00 392.77V403.14M1165.80 441.13V444.59M1165.80 451.49V454.95M1165.70 458.40V461.86M1166.00 510.21V530.94M1165.80 541.29V544.76M1165.90 555.11V565.48M1165.90 596.55V600.02M1165.90 617.28V620.74M1165.90 627.64V634.56M1165.90 710.53V714.00M1165.65 724.35V748.54" stroke="#000" stroke-width="4.3" stroke-linecap="round" stroke-dasharray="0 3.4539" fill="none"/>
<path d="M386.25 392.77H389.0M386.25 403.13H389.0M386.25 410.04H389.0M386.25 416.95H389.0M386.25 423.86H389.0M386.25 430.77H389.0M386.25 437.67H389.0M386.25 444.58H389.0M386.25 451.49H389.0M386.25 458.40H389.0M386.25 468.76H389.0M386.25 475.67H389.0M386.25 482.57H389.0M386.25 489.48H389.0M386.25 496.39H389.0M386.25 503.30H389.0M386.25 510.21H389.0M386.25 517.11H389.0M386.25 524.02H389.0M386.25 530.93H389.0M386.25 541.29H389.0M386.25 548.20H389.0M386.25 555.11H389.0M386.25 562.02H389.0M386.25 568.92H389.0M386.25 575.83H389.0M386.25 582.74H389.0M386.25 589.65H389.0M386.25 596.55H389.0M386.25 603.46H389.0M386.25 613.82H389.0M386.25 620.73H389.0M386.25 627.64H389.0M386.25 634.55H389.0M386.25 641.46H389.0M386.25 648.36H389.0M386.25 655.27H389.0M386.25 662.18H389.0M386.25 669.09H389.0M386.25 676.00H389.0M386.25 686.36H389.0M386.25 693.26H389.0M386.25 700.17H389.0M386.25 707.08H389.0M386.25 713.99H389.0M386.25 720.90H389.0M386.25 727.80H389.0M386.25 734.71H389.0M386.25 741.62H389.0M386.25 748.53H389.0M426.2 750.3v2.75M518.8 750.3v2.75M611.3 750.3v2.75M703.8 750.3v2.75M796.4 750.3v2.75M888.9 750.3v2.75M981.5 750.3v2.75M1074.0 750.3v2.75M1166.6 750.3v2.75" stroke="#333" stroke-width="1.07" fill="none"/>
<g font-size="8.8" fill="#4d4d4d" text-anchor="end">
<text x="384.1" y="396.32">forcats</text>
<text x="384.1" y="406.68">utf8</text>
<text x="384.1" y="413.59">bitops</text>
<text x="384.1" y="420.50">mnormt</text>
<text x="384.1" y="427.41">jsonlite</text>
<text x="384.1" y="434.32">haven</text>
<text x="384.1" y="441.22">promises</text>
<text x="384.1" y="448.13">munsell</text>
<text x="384.1" y="455.04">tidyr</text>
<text x="384.1" y="461.95">caTools</text>
<text x="384.1" y="472.31">DRR</text>
<text x="384.1" y="479.22">minqa</text>
<text x="384.1" y="486.12">RcppEigen</text>
<text x="384.1" y="493.03">labelled</text>
<text x="384.1" y="499.94">multcomp</text>
<text x="384.1" y="506.85">htmltools</text>
<text x="384.1" y="513.76">classInt</text>
<text x="384.1" y="520.66">stringr</text>
<text x="384.1" y="527.57">digest</text>
<text x="384.1" y="534.48">scales</text>
<text x="384.1" y="544.84">gower</text>
<text x="384.1" y="551.75">dimRed</text>
<text x="384.1" y="558.66">RcppRoll</text>
<text x="384.1" y="565.57">purrr</text>
<text x="384.1" y="572.47">evaluate</text>
<text x="384.1" y="579.38">yaml</text>
<text x="384.1" y="586.29">prodlim</text>
<text x="384.1" y="593.20">questionr</text>
<text x="384.1" y="600.10">bindrcpp</text>
<text x="384.1" y="607.01">sandwich</text>
<text x="384.1" y="617.37">mvtnorm</text>
<text x="384.1" y="624.28">recipes</text>
<text x="384.1" y="631.19">ModelMetrics</text>
<text x="384.1" y="638.10">plyr</text>
<text x="384.1" y="645.01">e1071</text>
<text x="384.1" y="651.91">kernlab</text>
<text x="384.1" y="658.82">klaR</text>
<text x="384.1" y="665.73">earth</text>
<text x="384.1" y="672.64">party</text>
<text x="384.1" y="679.55">proxy</text>
<text x="384.1" y="689.91">randomForest</text>
<text x="384.1" y="696.81">subselect</text>
<text x="384.1" y="703.72">testthat</text>
<text x="384.1" y="710.63">dplyr</text>
<text x="384.1" y="717.54">pamr</text>
<text x="384.1" y="724.45">sp</text>
<text x="384.1" y="731.35">RgoogleMaps</text>
<text x="384.1" y="738.26">hexbin</text>
<text x="384.1" y="745.17">geosphere</text>
<text x="384.1" y="752.08">ggmap</text>
</g>
<g font-size="8.8" fill="#4d4d4d" text-anchor="middle">
<text x="426.2" y="762.8">00:00:00</text>
<text x="518.8" y="762.8">03:00:00</text>
<text x="611.3" y="762.8">06:00:00</text>
<text x="703.8" y="762.8">09:00:00</text>
<text x="796.4" y="762.8">12:00:00</text>
<text x="888.9" y="762.8">15:00:00</text>
<text x="981.5" y="762.8">18:00:00</text>
<text x="1074.0" y="762.8">21:00:00</text>
<text x="1166.6" y="762.8">24:00:00</text>
</g>
<text x="796.4" y="776.6" font-size="11" fill="#000" text-anchor="middle">time</text>
<text transform="translate(324.5,571.2) rotate(-90)" font-size="11" fill="#000" text-anchor="middle">package (104 unique)</text>
</svg>
<span class="t" id="url" style="left:590.0px;top:44.00px;font-size:13px;font-weight:400;color:#111;transform:scaleX(0.9746);-webkit-text-stroke:.15px #111;">jcheng.shinyapps.io</span>
<span class="t" id="logotxt" style="left:111.2px;top:84.00px;font-size:20px;font-weight:400;color:#fff;transform:scaleX(0.9640);">CRAN whales</span>
<span class="t" id="lbl_date" style="left:70.6px;top:135.00px;font-size:13.3px;font-weight:700;color:#fff;transform:scaleX(0.9539);">Date</span>
<span class="t" id="val_date" style="left:83.6px;top:167.00px;font-size:13.8px;font-weight:400;color:#4a4a4a;transform:scaleX(0.9068);">2018-05-28</span>
<span class="t" id="lbl_top" style="left:70.8px;top:221.00px;font-size:13.3px;font-weight:700;color:#fff;transform:scaleX(0.9653);">Show top N downloaders:</span>
<span class="t" id="val_top" style="left:83.8px;top:253.00px;font-size:13.8px;font-weight:400;color:#4a4a4a;transform:scaleX(0.8455);">6</span>
<span class="t" id="tab1" style="left:317.0px;top:152.00px;font-size:13.8px;font-weight:400;color:#444;transform:scaleX(0.9875);">All traffic</span>
<span class="t" id="tab2" style="left:405.5px;top:152.00px;font-size:13.8px;font-weight:400;color:#444;transform:scaleX(0.9298);">Biggest whales</span>
<span class="t" id="tab3" style="left:529.3px;top:152.00px;font-size:13.8px;font-weight:400;color:#444;transform:scaleX(0.9347);">Whales by hour</span>
<span class="t" id="tab4" style="left:655.5px;top:152.00px;font-size:13.8px;font-weight:400;color:#444;transform:scaleX(0.9488);">Detail view</span>
<span class="t" id="lbl_dn" style="left:310.8px;top:192.00px;font-size:13.5px;font-weight:700;color:#222;transform:scaleX(0.9658);">Downloader name</span>
<span class="t" id="sel" style="left:323.6px;top:224.00px;font-size:13.8px;font-weight:400;color:#333;transform:scaleX(0.9397);">relieved_snake [NL]</span>
<span class="t" id="v1" style="left:321.0px;top:275.00px;font-size:35px;font-weight:700;color:#fff;transform:scaleX(0.9634);-webkit-text-stroke:.5px #fff;">7.7 GiB</span>
<span class="t" id="s1" style="left:320.8px;top:327.00px;font-size:14.5px;font-weight:400;color:#fff;transform:scaleX(0.9953);-webkit-text-stroke:.25px #fff;">bandwidth consumed</span>
<span class="t" id="v2" style="left:629.6px;top:275.00px;font-size:35px;font-weight:700;color:#fff;transform:scaleX(1.0616);-webkit-text-stroke:.5px #fff;">11,904</span>
<span class="t" id="s2" style="left:629.7px;top:327.00px;font-size:14.5px;font-weight:400;color:#fff;transform:scaleX(0.9923);-webkit-text-stroke:.25px #fff;">files downloaded</span>
<span class="t" id="v3" style="left:939.0px;top:275.00px;font-size:35px;font-weight:700;color:#fff;transform:scaleX(1.0307);-webkit-text-stroke:.5px #fff;">104</span>
<span class="t" id="s3" style="left:938.8px;top:327.00px;font-size:14.5px;font-weight:400;color:#fff;transform:scaleX(0.9667);-webkit-text-stroke:.25px #fff;">unique packages</span>
</body>
</html>
